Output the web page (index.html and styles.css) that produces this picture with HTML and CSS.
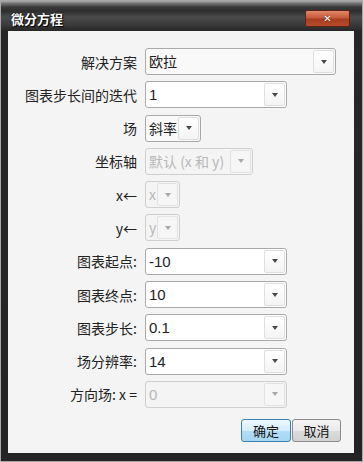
FILE: index.html
```html
<!DOCTYPE html>
<html lang="zh">
<head>
<meta charset="utf-8">
<link rel="stylesheet" href="styles.css">
</head>
<body>
<div class="window">
  <div class="titlebar">
    <span class="title">微分方程</span>
    <span class="close">✕</span>
  </div>
  <div class="panel">
    <div class="form">
      <span class="lbl">解决方案</span>
      <div class="combo plain w191"><span class="val">欧拉</span><span class="drop"></span></div>

      <span class="lbl">图表步长间的迭代</span>
      <div class="combo w142"><span class="val num">1</span><span class="drop"></span></div>

      <span class="lbl">场</span>
      <div class="combo plain w56"><span class="val">斜率</span><span class="drop"></span></div>

      <span class="lbl">坐标轴</span>
      <div class="combo disabled w108"><span class="val">默认 (x 和 y)</span><span class="drop"></span></div>

      <span class="lbl">x←</span>
      <div class="combo disabled w35"><span class="val">x</span><span class="drop"></span></div>

      <span class="lbl">y←</span>
      <div class="combo disabled w35"><span class="val">y</span><span class="drop"></span></div>

      <span class="lbl">图表起点:</span>
      <div class="combo w142"><span class="val num">-10</span><span class="drop"></span></div>

      <span class="lbl">图表终点:</span>
      <div class="combo w142"><span class="val num">10</span><span class="drop"></span></div>

      <span class="lbl">图表步长:</span>
      <div class="combo w142"><span class="val num">0.1</span><span class="drop"></span></div>

      <span class="lbl">场分辨率:</span>
      <div class="combo w142"><span class="val num">14</span><span class="drop"></span></div>

      <span class="lbl">方向场: x =</span>
      <div class="combo disabled w142"><span class="val num">0</span><span class="drop"></span></div>
    </div>
    <div class="buttons">
      <span class="btn ok">确定</span>
      <span class="btn cancel">取消</span>
    </div>
  </div>
</div>
</body>
</html>
```
FILE: styles.css
```css
html, body {
  margin: 0;
  padding: 0;
  background: #ffffff;
}
body {
  font-family: "Liberation Sans", "Noto Sans CJK SC", sans-serif;
}
.window {
  box-sizing: border-box;
  width: 363px;
  height: 462px;
  border: 1px solid #a8a8a8;
  background: linear-gradient(to bottom, #b0b0b0 0px, #7a7a7a 2px, #3c3c3c 6px, #2e2e2e 10px, #4c4c4c 16px, #3a3a3a 24px, #262626 30px, #242424 100%);
  padding: 0 8px 8px 7px;
  display: flex;
  flex-direction: column;
}
.titlebar {
  height: 30px;
  display: flex;
  align-items: flex-start;
  justify-content: space-between;
}
.title {
  margin-top: 10px;
  margin-left: 3px;
  font-family: "Noto Sans CJK SC", sans-serif;
  font-weight: bold;
  font-size: 13px;
  line-height: 16px;
  color: #ffffff;
  text-shadow: 0 0 2px #000, 1px 1px 1px #000;
}
.close {
  box-sizing: border-box;
  margin-top: 9px;
  margin-right: 4px;
  width: 45px;
  height: 17px;
  border: 1px solid #5a2416;
  border-radius: 2px;
  background: linear-gradient(to bottom, #e2876a 0%, #c65a3a 45%, #a83d22 55%, #b84a2c 100%);
  color: #ffffff;
  font-family: "DejaVu Sans", sans-serif;
  font-weight: bold;
  font-size: 10px;
  line-height: 15px;
  text-align: center;
  text-shadow: 0 0 2px #5a1a0a;
}
.panel {
  flex: 1;
  background: #f4f4f4;
  padding-top: 17px;
  display: flex;
  flex-direction: column;
}
.form {
  display: grid;
  grid-template-columns: 129px 1fr;
  column-gap: 8px;
  row-gap: 6.3px;
  grid-auto-rows: 27px;
}
.lbl {
  align-self: center;
  justify-self: end;
  font-family: "Noto Sans CJK SC", sans-serif;
  font-size: 14px;
  line-height: 18px;
  color: #222222;
  white-space: nowrap;
}
.combo {
  box-sizing: border-box;
  height: 27px;
  display: flex;
  align-items: stretch;
  border: 1px solid #a9a9a9;
  border-radius: 3px;
  background: #ffffff;
  padding: 1px;
  justify-self: start;
}
.combo.plain {
  background: #f9f9f9;
}
.combo.disabled {
  background: #f4f4f4;
  border-color: #cfcfcf;
}
.w191 { width: 191px; }
.w142 { width: 142px; }
.w108 { width: 108px; }
.w56 { width: 56px; }
.w35 { width: 35px; }
.val {
  flex: 1;
  min-width: 0;
  overflow: hidden;
  white-space: nowrap;
  padding-left: 2px;
  font-family: "Noto Sans CJK SC", sans-serif;
  font-size: 14px;
  line-height: 23px;
  color: #1e1e1e;
}
.val.num {
  font-family: "Liberation Sans", sans-serif;
  font-size: 15px;
}
.disabled .val {
  color: #b8b8b8;
}
.drop {
  box-sizing: border-box;
  flex: 0 0 21px;
  border: 1px solid #dedede;
  border-radius: 2px;
  background: linear-gradient(to bottom, #ffffff, #f4f4f4);
  display: flex;
  align-items: center;
  justify-content: center;
}
.drop::after {
  content: "";
  width: 0;
  height: 0;
  border-left: 3.5px solid transparent;
  border-right: 3.5px solid transparent;
  border-top: 4px solid #4a4a4a;
}
.disabled .drop::after {
  border-top-color: #a8a8a8;
}
.disabled .drop {
  border-color: #e2e2e2;
  background: #f6f6f6;
}
.buttons {
  margin-top: 11px;
  padding-right: 13px;
  display: flex;
  justify-content: flex-end;
  gap: 1px;
}
.btn {
  box-sizing: border-box;
  height: 23px;
  border-radius: 3px;
  font-family: "Noto Sans CJK SC", sans-serif;
  font-size: 13px;
  line-height: 21px;
  text-align: center;
  color: #111111;
}
.btn.ok {
  width: 50px;
  border: 1px solid #3c7fb1;
  background: linear-gradient(to bottom, #eef8fe 0%, #d4ecfb 50%, #b2ddf6 51%, #a6d6f3 100%);
}
.btn.cancel {
  width: 49px;
  border: 1px solid #8a8a8a;
  background: linear-gradient(to bottom, #f4f4f4 0%, #ebebeb 50%, #dcdcdc 51%, #d2d2d2 100%);
}
```
